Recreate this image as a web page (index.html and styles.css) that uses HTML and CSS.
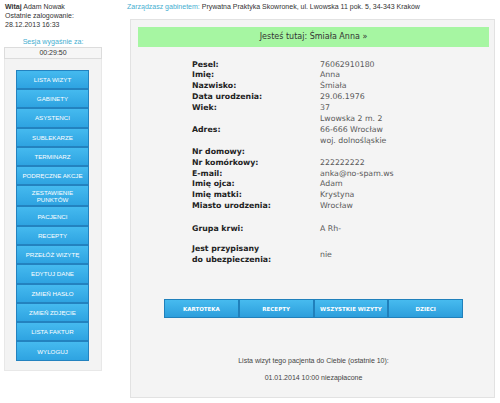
FILE: index.html
```html
<!DOCTYPE html>
<html lang="pl">
  <head>
    <meta charset="UTF-8" />
    <meta name="viewport" content="width=device-width, initial-scale=1" />
    <title>Pacjent</title>
    <link rel="stylesheet" href="styles.css">
  </head>
  <body>
    <div class="page">
      <aside class="side">
        <div class="user">
          <b>Witaj</b> Adam Nowak<br />
          Ostatnie zalogowanie:<br />
          28.12.2013 16:33
        </div>
        <div class="session-label">Sesja wygaśnie za:</div>
        <div class="timer">00:29:50</div>
        <nav class="menu">
          <a class="menu-btn" href="#">Lista wizyt</a>
          <a class="menu-btn" href="#">Gabinety</a>
          <a class="menu-btn" href="#">Asystenci</a>
          <a class="menu-btn" href="#">Sublekarze</a>
          <a class="menu-btn" href="#">Terminarz</a>
          <a class="menu-btn" href="#">Podręczne akcje</a>
          <a class="menu-btn menu-btn-tall" href="#">Zestawienie<br />punktów</a>
          <a class="menu-btn" href="#">Pacjenci</a>
          <a class="menu-btn" href="#">Recepty</a>
          <a class="menu-btn" href="#">Przełóż wizytę</a>
          <a class="menu-btn" href="#">Edytuj dane</a>
          <a class="menu-btn" href="#">Zmień hasło</a>
          <a class="menu-btn" href="#">Zmień zdjęcie</a>
          <a class="menu-btn" href="#">Lista faktur</a>
          <a class="menu-btn" href="#">Wyloguj</a>
        </nav>
      </aside>

      <main class="main">
        <div class="clinic">
          <span class="accent">Zarządzasz gabinetem:</span> Prywatna Praktyka
          Skowronek, ul. Lwowska 11 pok. 5, 34-343 Kraków
        </div>

        <div class="panel">
          <div class="crumb">Jesteś tutaj: Śmiała Anna »</div>

          <table class="details">
            <tr><th>Pesel:</th><td>76062910180</td></tr>
            <tr><th>Imię:</th><td>Anna</td></tr>
            <tr><th>Nazwisko:</th><td>Śmiała</td></tr>
            <tr><th>Data urodzenia:</th><td>29.06.1976</td></tr>
            <tr><th>Wiek:</th><td>37</td></tr>
            <tr>
              <th>Adres:</th>
              <td>Lwowska 2 m. 2<br />66-666 Wrocław<br />woj. dolnośląskie</td>
            </tr>
            <tr><th>Nr domowy:</th><td></td></tr>
            <tr><th>Nr komórkowy:</th><td>222222222</td></tr>
            <tr><th>E-mail:</th><td>anka@no-spam.ws</td></tr>
            <tr><th>Imię ojca:</th><td>Adam</td></tr>
            <tr><th>Imię matki:</th><td>Krystyna</td></tr>
            <tr><th>Miasto urodzenia:</th><td>Wrocław</td></tr>
            <tr class="spacer"><td colspan="2"></td></tr>
            <tr><th>Grupa krwi:</th><td>A Rh-</td></tr>
            <tr class="spacer spacer-small"><td colspan="2"></td></tr>
            <tr><th>Jest przypisany<br />do ubezpieczenia:</th><td>nie</td></tr>
          </table>

          <div class="tabs">
            <a class="tab" href="#">Kartoteka</a>
            <a class="tab" href="#">Recepty</a>
            <a class="tab" href="#">Wszystkie wizyty</a>
            <a class="tab" href="#">Dzieci</a>
          </div>

          <p class="visits-title">Lista wizyt tego pacjenta do Ciebie (ostatnie 10):</p>
          <p class="visit">01.01.2014 10:00 niezapłacone</p>
        </div>
      </main>
    </div>
  </body>
</html>
```

FILE: styles.css
```css
* {
  box-sizing: border-box;
}
body {
  margin: 0;
  background: #fff;
  color: #333;
  font-family: "Liberation Sans", Arial, sans-serif;
  font-size: 7px;
}
a {
  text-decoration: none;
}
.page {
  display: flex;
  padding: 1.5px 0 0 4px;
}

/* sidebar */
.side {
  flex: none;
  width: 98px;
}
.user {
  padding-left: 1px;
  line-height: 9.2px;
}
.session-label {
  margin-top: 8.5px;
  line-height: 9px;
  text-align: center;
  color: #45aed0;
  font-size: 7.1px;
}
.timer {
  height: 12px;
  border: 1px solid #dcdcdc;
  background: #f6f6f6;
  line-height: 10px;
  text-align: center;
  color: #333;
}
.menu {
  display: flex;
  flex-direction: column;
  height: 312px;
  padding: 11px 12px 0 11px;
  background: #f3f3f3;
  border: 1px solid #e8e8e8;
  border-top: none;
}
.menu-btn {
  display: flex;
  align-items: center;
  justify-content: center;
  height: 19.3px;
  border: 1px solid #2382bf;
  background: linear-gradient(#45baef, #2ea3e1);
  color: #fff;
  font-size: 6.2px;
  line-height: 7px;
  text-align: center;
  text-transform: uppercase;
}
.menu-btn-tall {
  height: 21px;
}

/* main column */
.main {
  flex: none;
  width: 368px;
  margin-left: 25px;
}
.clinic {
  line-height: 9px;
  white-space: nowrap;
}
.accent {
  color: #45aed0;
}
.panel {
  margin: 8.5px 0 0 3px;
  padding: 7px 5px 15px 7px;
  background: #f4f4f4;
  border: 1px solid #e2e2e2;
}
.crumb {
  height: 20px;
  line-height: 20px;
  background: #a6f6a2;
  text-align: center;
  color: #333;
  font-family: "DejaVu Sans", Verdana, sans-serif;
  font-size: 8px;
}
.details {
  width: 243px;
  margin: 12.5px auto 0;
  border-collapse: collapse;
  font-family: "DejaVu Sans", Verdana, sans-serif;
  font-size: 7.8px;
  line-height: 10.9px;
}
.details th,
.details td {
  padding: 0;
  vertical-align: middle;
  text-align: left;
}
.details th {
  width: 128px;
  font-weight: bold;
  color: #222;
}
.details td {
  color: #5a5a5a;
}
.details .spacer td {
  height: 12px;
}
.details .spacer-small td {
  height: 9px;
}
.tabs {
  display: flex;
  width: 299px;
  margin: 33.4px auto 0;
}
.tab {
  flex: 1;
  display: flex;
  align-items: center;
  justify-content: center;
  height: 19px;
  border: 1px solid #2080bb;
  background: linear-gradient(#47bbef, #2c9edc);
  color: #fff;
  font-family: "DejaVu Sans", Verdana, sans-serif;
  font-size: 5.5px;
  font-weight: bold;
  text-transform: uppercase;
}
.visits-title,
.visit {
  margin: 0;
  line-height: 9px;
  text-align: center;
  color: #444;
}
.visits-title {
  margin-top: 37.5px;
}
.visit {
  margin-top: 8.7px;
}
```
